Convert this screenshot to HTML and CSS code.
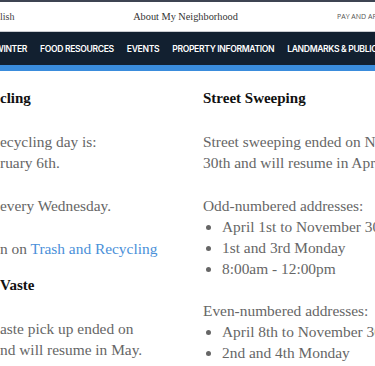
FILE: index.html
```html
<!DOCTYPE html>
<html lang="en">
<head>
    <meta charset="UTF-8">
    <meta name="viewport" content="width=device-width, initial-scale=1.0">
    <title>About My Neighborhood</title>
    <link rel="stylesheet" href="styles.css">
</head>
<body>
    <div class="frame">
        <header class="top-bar">
            <span class="lang">lish</span>
            <span class="site-title">About My Neighborhood</span>
            <span class="pay">PAY AND AP</span>
        </header>

        <nav class="main-nav">
            <a href="#">WINTER</a>
            <a href="#">FOOD RESOURCES</a>
            <a href="#">EVENTS</a>
            <a href="#">PROPERTY INFORMATION</a>
            <a href="#">LANDMARKS &amp; PUBLIC</a>
        </nav>
        <div class="accent-bar"></div>

        <main class="columns">
            <section class="col left">
                <h3>cling</h3>
                <p>ecycling day is:<br>ruary 6th.</p>
                <p>every Wednesday.</p>
                <p>n on <a href="#">Trash and Recycling</a></p>
                <h3 class="sub">Vaste</h3>
                <p>aste pick up ended on<br>nd will resume in May.</p>
            </section>

            <section class="col right">
                <h3>Street Sweeping</h3>
                <p>Street sweeping ended on November<br>30th and will resume in April.</p>
                <p class="list-label">Odd-numbered addresses:</p>
                <ul>
                    <li>April 1st to November 30th</li>
                    <li>1st and 3rd Monday</li>
                    <li>8:00am - 12:00pm</li>
                </ul>
                <p class="list-label">Even-numbered addresses:</p>
                <ul>
                    <li>April 8th to November 30th</li>
                    <li>2nd and 4th Monday</li>
                </ul>
            </section>
        </main>
    </div>
</body>
</html>
```

FILE: styles.css
```css
html, body {
    margin: 0;
    padding: 0;
    height: 100%;
    overflow: hidden;
    background: #fff;
}

.frame {
    height: 364px;
    border-top: 2px solid #3d4452;
    border-bottom: 2px solid #8a8a8a;
    overflow: hidden;
    white-space: nowrap;
}

/* Top strip */
.top-bar {
    height: 29px;
    display: flex;
    align-items: center;
    justify-content: space-between;
    border-bottom: 1px solid #c9ccd1;
    font-family: "Liberation Serif", serif;
    color: #444;
}

.lang {
    font-size: 10px;
    width: 40px;
}

.site-title {
    font-size: 10.3px;
    color: #333;
    margin-left: -6px;
}

.pay {
    font-family: "Open Sans", sans-serif;
    font-size: 7px;
    color: #555;
    width: 38px;
    overflow: hidden;
}

/* Navigation */
.main-nav {
    height: 33px;
    background: #122030;
    display: flex;
    align-items: center;
    gap: 13px;
    margin-left: -5px;
    font-family: "Inter", sans-serif;
    font-weight: 600;
    font-size: 8.6px;
    letter-spacing: -0.35px;
}

.main-nav a {
    color: #fff;
    text-decoration: none;
}

.accent-bar {
    height: 6px;
    background: #3a8cdc;
}

/* Content */
.columns {
    display: flex;
    font-family: "Liberation Serif", serif;
    font-size: 15.4px;
    line-height: 21px;
    color: #666;
}

.col {
    padding-top: 17px;
}

.left {
    width: 203px;
    flex-shrink: 0;
}

.right {
    flex: 1;
}

.col h3 {
    margin: 0 0 22px;
    font-size: 15px;
    color: #111;
    font-weight: bold;
}

.col h3.sub {
    margin-top: -6px;
}

.col p {
    margin: 0 0 22px;
}

.col a {
    color: #4a90d9;
    text-decoration: none;
}

.col p.list-label {
    margin: 0;
}

.col ul {
    margin: 0 0 21px;
    padding-left: 19px;
}
```
